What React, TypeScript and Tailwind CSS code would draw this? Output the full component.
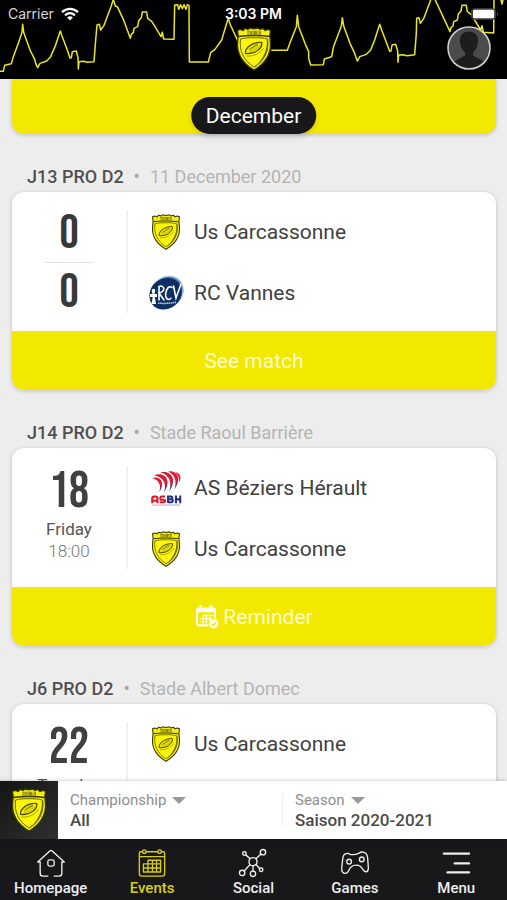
import { useState } from 'react';
import type { ReactNode } from 'react';

type TeamKey = 'usc' | 'rcv' | 'asbh';

interface Match {
  id: number;
  round: string;
  info: string;
  score?: [number, number];
  day?: string;
  weekday?: string;
  time?: string;
  teams: { key: TeamKey; name: string }[];
  action?: 'match' | 'reminder';
}

const matches: Match[] = [
  {
    id: 1,
    round: 'J13 PRO D2',
    info: '11 December 2020',
    score: [0, 0],
    teams: [
      { key: 'usc', name: 'Us Carcassonne' },
      { key: 'rcv', name: 'RC Vannes' },
    ],
    action: 'match',
  },
  {
    id: 2,
    round: 'J14 PRO D2',
    info: 'Stade Raoul Barrière',
    day: '18',
    weekday: 'Friday',
    time: '18:00',
    teams: [
      { key: 'asbh', name: 'AS Béziers Hérault' },
      { key: 'usc', name: 'Us Carcassonne' },
    ],
    action: 'reminder',
  },
  {
    id: 3,
    round: 'J6 PRO D2',
    info: 'Stade Albert Domec',
    day: '22',
    weekday: 'Tuesday',
    teams: [{ key: 'usc', name: 'Us Carcassonne' }],
  },
];

function Shield({ className }: { className?: string }) {
  return (
    <svg viewBox="0 0 36 44" className={className} aria-hidden="true">
      <path
        d="M1.5 3.5 4 2.5l3 1 2-2 3 1 2-1.5 4 .8 4-.8 2 1.5 3-1 2 2 3-1 2.500 1-.7 5 .7 8c.5 10-5 20-16.500 26.500C6.500 36.500 1 26.500 1.500 16.500L2.200 8.500z"
        fill="#f6ef08"
        stroke="#3a3905"
        strokeWidth="1.3"
        strokeLinejoin="round"
      />
      <path d="M2.500 9.500c5-.8 9.500-1 15.500-1s10.500.2 15.500 1" fill="none" stroke="#3a3905" strokeWidth="1.300" />
      <path
        d="M4.500 12c4-1 8-1.300 13.500-1.300s9.500.3 13.500 1.300c1.500 11.500-3 21.500-13.500 28-10.500-6.500-15-16.500-13.500-28z"
        fill="#fbf50a"
        stroke="#6a6708"
        strokeWidth="1"
      />
      <path d="M32 12c1.700 12-3 22-14 28.800 8.500-7.500 13.500-17 12.800-28z" fill="#6d6a08" />
      <path d="M11 3.800h14v4H11z" fill="#8e8a0a" />
      <path d="M12 4.300v3M14.500 4.300c-1.300 1-1.300 2 0 3M17 4l-.5 3.400M21 4l2.500 3.400M23.500 4l-2.500 3.400" stroke="#f6ef08" strokeWidth=".8" fill="none" />
      <path
        d="M9.500 26.500c-.8-6 7-11.500 16.300-11 .9 6-6.800 12-16.300 11z"
        fill="#d9d20a"
        stroke="#4a4806"
        strokeWidth="1.200"
      />
      <path d="M11 25.200c4-4.200 8.500-7 13.500-8.700" stroke="#f9f20a" strokeWidth="1.600" fill="none" />
      <path d="M13.500 23c3-2.800 5.500-4.300 8.500-5.500" stroke="#4a4806" strokeWidth=".9" fill="none" />
      <path d="M10.500 29c6.500.8 14-2.500 17-8" stroke="#a5a00a" strokeWidth="1" fill="none" />
    </svg>
  );
}

function VannesLogo({ className }: { className?: string }) {
  return (
    <svg viewBox="0 0 36 36" className={className} aria-hidden="true">
      <ellipse cx="19" cy="17" rx="17.500" ry="15.500" transform="rotate(-40 19 17)" fill="#8fb6dc" />
      <ellipse cx="18.500" cy="17.800" rx="17.200" ry="15.400" transform="rotate(-40 18.500 17.800)" fill="#fff" />
      <ellipse cx="18.300" cy="18" rx="17.400" ry="15" transform="rotate(-42 18.300 18)" fill="#3f74ad" />
      <ellipse cx="17.500" cy="18.700" rx="17" ry="14.800" transform="rotate(-40 17.500 18.700)" fill="#0d2f63" />
      <path d="M3.500 29l1.200-7H2v-3h2.500l-.8-3.500h3.500L6.500 19H9v3H6.800l1.200 7z" fill="#fff" />
      <circle cx="5.500" cy="15.500" r="1.700" fill="#fff" />
      <g fill="none" stroke="#fff" strokeWidth="1.600" strokeLinecap="round">
        <path d="M11 25V11.500c5-2 7.500 4.500 0 6.500l5 7" />
        <path d="M24 12.500c-5-4-8.500 9-4.500 11.500 1.300.8 2.500.3 3.500-.7" />
        <path d="M25.500 11l2.500 12 5-14" />
      </g>
      <path d="M10 28.200c6 .4 12 .3 18-1" stroke="#c2d4e8" strokeWidth="1.500" strokeDasharray="1.500 .6" fill="none" />
    </svg>
  );
}

function BeziersLogo({ className }: { className?: string }) {
  return (
    <svg viewBox="0 0 32 38" className={className} aria-hidden="true">
      <defs>
        <linearGradient id="asbh-stripe" x1="0" y1="0" x2="0" y2="1">
          <stop offset="0.55" stopColor="#dc1a32" />
          <stop offset="0.8" stopColor="#27337c" />
        </linearGradient>
      </defs>
      <g fill="url(#asbh-stripe)">
        <path d="M1 8.500C8 6 16.500 11 9 23.500 11 16 9 10.500 1 8.500z" />
        <path d="M3.500 5.500C13 1.500 23.500 9.500 14 23.500 17 14.500 13.500 7.500 3.500 5.500z" />
        <path d="M10 2.500C20 0 29 8.500 19.500 22.500 22.500 13.500 20 5.500 10 2.500z" />
        <path d="M18.500 1.500C27 .5 33.500 8 25 20.500 27.500 12.500 26 5 18.500 1.500z" />
        <path d="M25.500 2.500c5 .5 7.500 4.500 4.500 10.500.3-4.500-1-8-4.500-10.500z" />
      </g>
      <g fill="none" strokeWidth="2.200" strokeLinejoin="round">
        <path d="M1.500 35v-5q0-2 2-2h1.500q2 0 2 2v5M1.500 32.500h5.500M15 28h-3.500q-1.500 0-1.500 1.700t1.500 1.700h2q1.500 0 1.500 1.300t-1.500 1.300H9.500" stroke="#d8182f" />
        <path d="M18.200 27v7h3.300q1.700 0 1.700-1.700t-1.700-1.500h-3.300M18.200 28h3q1.500 0 1.500 1.400t-1.500 1.400M26.500 27v8M31 27v8M26.500 31h4.500" stroke="#27337c" />
      </g>
      <path d="M1 37h15" stroke="#e99aa4" strokeWidth="1" />
      <path d="M16 37h15" stroke="#a3a7c8" strokeWidth="1" />
    </svg>
  );
}

function TeamLogo({ team }: { team: TeamKey }) {
  if (team === 'rcv') return <VannesLogo className="h-9 w-9" />;
  if (team === 'asbh') return <BeziersLogo className="h-9 w-9" />;
  return <Shield className="h-9 w-9" />;
}

function Skyline() {
  return (
    <svg
      viewBox="0 0 1521 237"
      preserveAspectRatio="xMidYMin slice"
      className="absolute inset-0 h-full w-full"
      fill="none"
      stroke="#ece61c"
      strokeWidth="4.500"
      strokeLinejoin="round"
      aria-hidden="true"
    >
      <path d="M0 214H10L14 196L34 191L40 170L55 130L66 97L68 73L71 97L90 150L104 178L107 190L113 203L120 190L140 183L152 170L165 140L181 93L186 108L200 145L210 174L214 173L217 155L229 153L234 172L235 207L237 185L250 184L262 187L282 185L287 120L291 75L298 73L302 90L312 76L333 20L340 -2L346 18L352 20L370 58L391 115L394 103L400 98L402 85L413 80L416 62L424 53L427 36L440 36L443 55L455 64L465 80L483 110L487 97L491 117L522 118L524 15L533 14L536 28L542 14L547 26L552 14L558 28L562 14L567 16L568 186L625 186L632 158L645 148L665 120L680 70L685 55L690 72L714 124" />
      <path d="M814 151H862L870 128L889 80L892 46L896 80L915 130L926 155L926 175L932 195L970 194L973 177L995 170L1000 142L1012 110L1024 78L1027 53L1031 78L1050 130L1063 158L1072 183L1079 170L1099 163L1112 150L1124 120L1139 73L1145 90L1169 154L1173 153L1176 135L1187 133L1193 152L1194 187L1196 165L1209 164L1221 167L1244 164L1249 100L1250 55L1257 53L1261 70L1271 56L1292 0L1299 -22L1305 -2L1329 50L1350 95L1353 83L1359 78L1361 65L1372 60L1375 42L1383 33L1386 16L1399 16L1402 35L1414 44L1424 60L1442 90L1446 77L1450 97L1481 99L1482 -5M1502 -5L1506 12L1510 -5" />
    </svg>
  );
}

function StatusHeader() {
  return (
    <header className="relative h-[79px] shrink-0 overflow-hidden bg-black text-white">
      <Skyline />
      <div className="relative grid grid-cols-3 items-center px-2 pt-1 font-['Inter','Liberation_Sans',sans-serif] text-sm leading-5">
        <div className="flex items-center gap-[6px] text-[#d8d8d8]">
          <span>Carrier</span>
          <svg viewBox="0 0 20 15" className="h-[14px] w-5" fill="none" stroke="#fff" strokeWidth="2.500" aria-hidden="true">
            <path d="M1.500 5.500c5-4.700 12-4.700 17 0M4.700 8.900c3.200-2.900 7.400-2.900 10.600 0" />
            <path d="M6.900 11.200c2-1.700 4.200-1.700 6.200 0L10 14.500z" fill="#fff" stroke="none" />
          </svg>
        </div>
        <span className="text-center font-semibold">3:03 PM</span>
        <svg viewBox="0 0 29 12" className="h-3 w-7 justify-self-end" aria-hidden="true">
          <rect x="0.500" y="0.500" width="25" height="11" rx="3" fill="#333" stroke="#444" />
          <rect x="2" y="1.500" width="22" height="9" rx="1.500" fill="#fff" />
          <path d="M27 4c1.500.7 1.500 3.300 0 4z" fill="#555" />
        </svg>
      </div>
      <Shield className="absolute top-[27px] left-1/2 h-11 w-9 -translate-x-1/2" />
      <button type="button" aria-label="Profile" className="absolute top-[26px] right-4 h-11 w-11">
        <svg viewBox="0 0 44 44" className="h-full w-full" aria-hidden="true">
          <circle cx="22" cy="22" r="21" fill="#4b4b4b" stroke="#d4d4d4" strokeWidth="1.500" />
          <path d="M22 5.500c-6 0-9.500 4-9 10 .1 4.500 2 8.500 5 11v3c-3 2.500-7.500 3-10.500 6a20 20 0 0 0 29 0c-3-3-7.500-3.500-10.500-6v-3c3-2.500 4.900-6.500 5-11 .5-6-3-10-9-10z" fill="#1d1d1d" />
        </svg>
      </button>
    </header>
  );
}

function ReminderIcon() {
  return (
    <svg viewBox="0 0 23 23" className="h-6 w-6" aria-hidden="true">
      <path d="M1 7V4.500Q1 2.500 3 2.500h15q2 0 2 2V7z" fill="#fffef0" />
      <path d="M5.500.8v3M15.500.8v3" stroke="#fffef0" strokeWidth="2.500" strokeLinecap="round" />
      <path d="M2 6v11.500q0 2 2 2h9M19 6v7" fill="none" stroke="#fffef0" strokeWidth="2" />
      <path d="M8 10h9M5 13h11M5 16h7M8 9v9M11 9v9M14 9v6" stroke="#fffef0" strokeWidth="1.300" />
      <circle cx="18" cy="18" r="4.500" fill="#fffef0" />
      <path d="M16 18l1.500 1.500L20.500 16.500" fill="none" stroke="#f2e800" strokeWidth="1.200" />
    </svg>
  );
}

function MatchCard({ match }: { match: Match }) {
  return (
    <section>
      <h2 className="flex h-[58px] items-end gap-[10px] px-[15px] pb-[3px] text-lg leading-6 font-medium text-[#505050]">
        <span>{match.round}</span>
        <span className="text-[#a8a8a8]">•</span>
        <span className="font-normal text-[#b4b4b4]">{match.info}</span>
      </h2>
      <div className="overflow-hidden rounded-xl bg-white shadow-[0_1px_4px_rgba(0,0,0,0.2)]">
        <div className="flex h-[139px] py-[18px]">
          <div className="flex w-[116px] shrink-0 flex-col items-center border-r-2 border-[#f1f1f1]">
            {match.score ? (
              <div className="flex flex-col items-center pt-[2px] font-['Bebas_Neue','Roboto_Condensed',sans-serif] text-5xl leading-11 text-[#383838]">
                <span>{match.score[0]}</span>
                <span className="mt-[6px] mb-2 h-px w-[50px] shrink-0 bg-[#e4e4e4]" />
                <span>{match.score[1]}</span>
              </div>
            ) : (
              <>
                <span className="font-['Bebas_Neue','Roboto_Condensed',sans-serif] text-[50px] leading-[52px] text-[#404040]">
                  {match.day}
                </span>
                <span className="text-[17px] leading-[22px] text-[#555]">{match.weekday}</span>
                <span className="text-[17px] leading-[22px] font-light text-[#777]">{match.time}</span>
              </>
            )}
          </div>
          <ul className="flex flex-1 flex-col gap-[25px] pt-1 pl-5">
            {match.teams.map((team) => (
              <li key={team.key} className="flex items-center gap-[10px] text-[21px] leading-9 text-[#404040]">
                <TeamLogo team={team.key} />
                <span>{team.name}</span>
              </li>
            ))}
          </ul>
        </div>
        {match.action && (
          <button
            type="button"
            className="flex h-[59px] w-full items-center justify-center gap-1 bg-[#f2e800] pt-px text-[21px] leading-6 text-[#fffccc]"
          >
            {match.action === 'reminder' && <ReminderIcon />}
            {match.action === 'reminder' ? 'Reminder' : 'See match'}
          </button>
        )}
      </div>
    </section>
  );
}

interface FilterProps {
  id: string;
  label: string;
  options: string[];
}

function Filter({ id, label, options }: FilterProps) {
  return (
    <div className="flex flex-1 flex-col justify-center">
      <label htmlFor={id} className="flex items-center gap-[6px] text-[15px] leading-5 text-[#8d8d8d]">
        {label}
        <svg viewBox="0 0 14 7" className="h-[7px] w-[14px]" aria-hidden="true">
          <path d="M0 0h14L7 7z" fill="#999" />
        </svg>
      </label>
      <select id={id} className="w-full appearance-none bg-transparent text-[17px] leading-5 font-medium text-[#4a4a4a] outline-none">
        {options.map((option) => (
          <option key={option}>{option}</option>
        ))}
      </select>
    </div>
  );
}

const tabs: { name: string; icon: ReactNode }[] = [
  {
    name: 'Homepage',
    icon: (
      <>
        <path d="M3.500 14.500v12Q3.500 30 6.500 30H12M19 30h5.500q3 0 3-3.500v-12" />
        <path d="M3.500 14.500H.800L14.500 2q1-.8 2 0l13.700 12.500h-2.700" />
        <rect x="12" y="12" width="7" height="7" rx="2" />
      </>
    ),
  },
  {
    name: 'Events',
    icon: (
      <>
        <path d="M5 3H3Q1.500 3 1.500 4.500v23Q1.500 30 4 30h23q2.500 0 2.500-2.500v-23Q29.500 3 28 3h-2M9 3h13M1.500 8.500h28" />
        <circle cx="7" cy="3" r="2" />
        <circle cx="24" cy="3" r="2" />
        <path d="M11 12.500h14v13H6v-9h19M11 12.500v13M16 12.500v13M20.500 12.500v13M25 21H6" />
      </>
    ),
  },
  {
    name: 'Social',
    icon: (
      <>
        <circle cx="15.500" cy="14" r="4.500" />
        <circle cx="26.500" cy="3.500" r="3" />
        <circle cx="6" cy="5" r="2" />
        <circle cx="3.500" cy="26.500" r="3" />
        <circle cx="15.500" cy="27.500" r="3" />
        <circle cx="24.500" cy="23" r="2" />
        <path d="M18.800 10.800l5.500-5.200M12.300 10.800L7.500 6.500M12.300 17.200l-6.600 7.200M15.500 18.500v6M18.800 17.200l4.200 4.300" />
      </>
    ),
  },
  {
    name: 'Games',
    icon: (
      <>
        <path d="M4.500 5.500Q8 4 10 6q5.500 1 10-1.500 3-2 6-.5 3 1 3.500 6l.8 11q0 4-2.500 4.300-2 0-4-3.300-2.500-4.500-7.500-4.200-5.300.200-7.300 5.200-1.800 4-4 4Q.500 27 .800 21L2 10q.5-3.500 2.500-4.500z" />
        <circle cx="9" cy="14" r="2.600" />
        <circle cx="23" cy="11.500" r="2.600" />
      </>
    ),
  },
  {
    name: 'Menu',
    icon: <path d="M2 5h28M14 16h16M6 26h24" strokeWidth="2.500" />,
  },
];

export default function App() {
  const [activeTab, setActiveTab] = useState('Events');

  return (
    <div className="flex h-screen flex-col overflow-hidden bg-[#ededed] font-['Roboto',sans-serif]">
      <StatusHeader />

      <main className="relative min-h-0 flex-1 overflow-hidden px-3 pr-[11px]">
        {/* Bottom of the previous match card, still scrolling out */}
        <div className="h-[55px] rounded-b-xl bg-[#f2e800] shadow-[0_1px_4px_rgba(0,0,0,0.2)]" />
        <div className="absolute top-[18px] left-1/2 -translate-x-1/2 rounded-full bg-[#18181b] px-[15px] pt-px text-[21px] leading-9 text-white shadow-md">
          December
        </div>
        {matches.map((match) => (
          <MatchCard key={match.id} match={match} />
        ))}
      </main>

      {/* Filters */}
      <div className="z-10 flex h-[58px] shrink-0 bg-white shadow-[0_0_4px_rgba(0,0,0,0.25)]">
        <div className="flex w-[58px] shrink-0 items-center justify-center bg-linear-to-br from-[#151515] to-[#303030]">
          <Shield className="h-11 w-9" />
        </div>
        <div className="flex flex-1 pl-3">
          <Filter id="championship" label="Championship" options={['All']} />
          <div className="my-3 mr-3 w-px bg-[#f0f0f0]" />
          <Filter id="season" label="Season" options={['Saison 2020-2021']} />
        </div>
      </div>

      {/* Tab bar */}
      <nav className="grid h-[61px] shrink-0 grid-cols-5 bg-[#18181b]">
        {tabs.map((tab) => (
          <button
            key={tab.name}
            type="button"
            onClick={() => setActiveTab(tab.name)}
            className={`flex flex-col items-center gap-px pt-[10px] text-[15px] leading-5 font-medium ${
              activeTab === tab.name ? 'text-[#d6ce12]' : 'text-[#eeeeee]'
            }`}
          >
            <svg viewBox="0 0 31 31" className="h-7 w-7 shrink-0 overflow-visible" fill="none" stroke="currentColor" strokeWidth="1.500" strokeLinejoin="round" strokeLinecap="round" aria-hidden="true">
              {tab.icon}
            </svg>
            {tab.name}
          </button>
        ))}
      </nav>
    </div>
  );
}
